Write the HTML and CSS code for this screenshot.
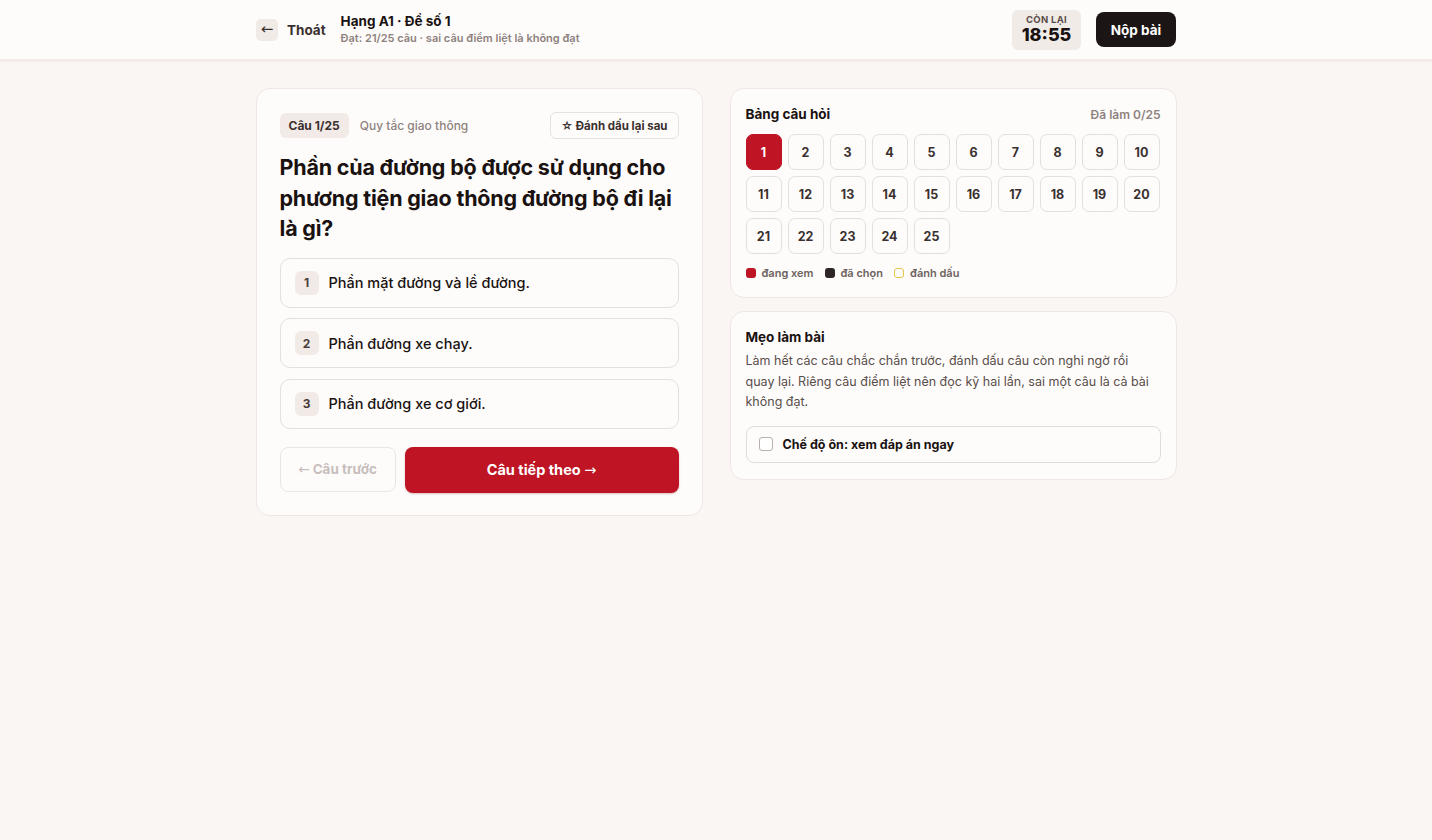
FILE: index.html
```html
<!DOCTYPE html>
<html lang="vi">
<head>
<meta charset="utf-8">
<title>Hạng A1 · Đề số 1</title>
<link rel="stylesheet" href="styles.css">
</head>
<body>
<header class="topbar">
  <div class="topbar-inner">
    <div class="left">
      <button class="back"><span class="arrow">←</span></button>
      <span class="exit">Thoát</span>
      <div class="title-block">
        <div class="title">Hạng A1 · Đề số 1</div>
        <div class="subtitle">Đạt: 21/25 câu · sai câu điểm liệt là không đạt</div>
      </div>
    </div>
    <div class="right">
      <div class="timer">
        <div class="timer-label">CÒN LẠI</div>
        <div class="timer-value">18:55</div>
      </div>
      <button class="submit">Nộp bài</button>
    </div>
  </div>
</header>

<main class="content">
  <section class="card question-card">
    <div class="q-head">
      <span class="chip">Câu 1/25</span>
      <span class="category">Quy tắc giao thông</span>
      <button class="mark">☆ Đánh dấu lại sau</button>
    </div>
    <h1 class="question">Phần của đường bộ được sử dụng cho phương tiện giao thông đường bộ đi lại là gì?</h1>
    <div class="options">
      <button class="option"><span class="num">1</span><span class="opt-text">Phần mặt đường và lề đường.</span></button>
      <button class="option"><span class="num">2</span><span class="opt-text">Phần đường xe chạy.</span></button>
      <button class="option"><span class="num">3</span><span class="opt-text">Phần đường xe cơ giới.</span></button>
    </div>
    <div class="nav">
      <button class="prev"><span class="ar">←</span> Câu trước</button>
      <button class="next">Câu tiếp theo <span class="ar">→</span></button>
    </div>
  </section>

  <div class="side">
    <section class="card board">
      <div class="board-head">
        <span class="board-title">Bảng câu hỏi</span>
        <span class="board-count">Đã làm 0/25</span>
      </div>
      <div class="grid">
        <button class="cell active">1</button>
        <button class="cell">2</button>
        <button class="cell">3</button>
        <button class="cell">4</button>
        <button class="cell">5</button>
        <button class="cell">6</button>
        <button class="cell">7</button>
        <button class="cell">8</button>
        <button class="cell">9</button>
        <button class="cell">10</button>
        <button class="cell">11</button>
        <button class="cell">12</button>
        <button class="cell">13</button>
        <button class="cell">14</button>
        <button class="cell">15</button>
        <button class="cell">16</button>
        <button class="cell">17</button>
        <button class="cell">18</button>
        <button class="cell">19</button>
        <button class="cell">20</button>
        <button class="cell">21</button>
        <button class="cell">22</button>
        <button class="cell">23</button>
        <button class="cell">24</button>
        <button class="cell">25</button>
      </div>
      <div class="legend">
        <span class="legend-item"><span class="sw sw-red"></span>đang xem</span>
        <span class="legend-item"><span class="sw sw-dark"></span>đã chọn</span>
        <span class="legend-item"><span class="sw sw-yellow"></span>đánh dấu</span>
      </div>
    </section>

    <section class="card tips">
      <h2 class="tips-title">Mẹo làm bài</h2>
      <p class="tips-text">Làm hết các câu chắc chắn trước, đánh dấu câu còn nghi ngờ rồi quay lại. Riêng câu điểm liệt nên đọc kỹ hai lần, sai một câu là cả bài không đạt.</p>
      <label class="review">
        <span class="checkbox"></span>
        <span class="review-text">Chế độ ôn: xem đáp án ngay</span>
      </label>
    </section>
  </div>
</main>
</body>
</html>
```

FILE: styles.css
```css
* { box-sizing: border-box; }
html, body { margin: 0; padding: 0; }
body {
  background: #faf6f3;
  font-family: "Inter", "Liberation Sans", sans-serif;
  color: #1a1210;
  min-height: 840px;
}
button { font-family: inherit; cursor: pointer; }

.topbar {
  background: #fdfcfb;
  border-bottom: 3px solid #f4eae8;
  height: 62px;
}
.topbar-inner {
  width: 920px;
  margin: 0 auto;
  height: 59px;
  display: flex;
  align-items: center;
  justify-content: space-between;
}
.left { display: flex; align-items: center; }
.back {
  width: 22px; height: 22px;
  border: none; border-radius: 5px;
  background: #f1ebe8;
  color: #3a302e;
  padding: 0;
  display: flex; align-items: center; justify-content: center;
}
.arrow { font-family: "DejaVu Sans", sans-serif; font-size: 15px; line-height: 1; }
.exit { margin-left: 9px; font-weight: 700; font-size: 13.5px; color: #3a302e; }
.title-block { margin-left: 15px; }
.title { font-weight: 700; font-size: 13.5px; color: #1a1210; line-height: 17px; }
.subtitle { font-size: 11px; font-weight: 600; color: #8d827e; line-height: 15px; margin-top: 1px; }

.right { display: flex; align-items: center; gap: 15px; }
.timer {
  background: #f1ebe8;
  border-radius: 6px;
  width: 69px; height: 40px;
  display: flex; flex-direction: column; align-items: center; justify-content: center;
}
.timer-label { font-size: 9.5px; font-weight: 700; letter-spacing: 0.3px; color: #5a4e4a; line-height: 11px; }
.timer-value { font-size: 18px; font-weight: 800; color: #1a1210; line-height: 20px; }
.submit {
  background: #1c1516;
  color: #fff;
  border: none; border-radius: 8px;
  width: 80px; height: 35px;
  font-size: 13.5px; font-weight: 700;
}

.content {
  width: 921px;
  margin: 26px auto 0;
  display: grid;
  grid-template-columns: 447px 447px;
  gap: 27px;
  align-items: start;
}
.card {
  background: #fdfcfb;
  border: 1px solid #f0e7e4;
  border-radius: 14px;
}
.question-card { padding: 23px 23px 22px; }
.q-head { display: flex; align-items: center; }
.chip {
  background: #f2eae7;
  border-radius: 6px;
  height: 25px; padding: 0 9px;
  display: inline-flex; align-items: center;
  font-size: 12px; font-weight: 700; color: #3a302e;
}
.category { margin-left: 11px; font-size: 12px; font-weight: 500; color: #8d827e; }
.mark {
  margin-left: auto;
  height: 27px; padding: 0 10px;
  background: #fdfcfb;
  border: 1px solid #e8e0dd; border-radius: 6px;
  font-size: 11.5px; font-weight: 700; color: #3a302e;
}
.question {
  margin: 13px 0 0;
  font-size: 21.5px; font-weight: 700; line-height: 30.5px;
  color: #1a1210;
  letter-spacing: -0.2px;
}
.options { margin-top: 14px; display: flex; flex-direction: column; gap: 10.5px; }
.option {
  height: 50px;
  border: 1px solid #e6dedb; border-radius: 10px;
  background: #fdfcfb;
  display: flex; align-items: center;
  padding: 0 14px;
  text-align: left;
}
.num {
  width: 24px; height: 24px;
  border-radius: 6px;
  background: #f2eae7;
  display: flex; align-items: center; justify-content: center;
  font-size: 12px; font-weight: 700; color: #4a3e3a;
}
.opt-text { margin-left: 10px; font-size: 14.5px; font-weight: 500; color: #1a1210; }
.nav { margin-top: 18px; display: flex; gap: 9px; }
.ar { font-family: "DejaVu Sans", sans-serif; font-weight: 400; }
.prev {
  width: 116px; height: 45px;
  background: #fdfcfb;
  border: 1px solid #ece5e2; border-radius: 8px;
  font-size: 13.5px; font-weight: 700; color: #c8bebb;
}
.next {
  flex: 1; height: 46px;
  background: #be1424;
  border: none; border-radius: 8px;
  color: #fff; font-size: 14.5px; font-weight: 700;
  box-shadow: 0 1px 2px rgba(120, 10, 20, 0.25);
}

.side { display: flex; flex-direction: column; gap: 13px; }
.board { padding: 15px 15px 17px; }
.board-head { display: flex; justify-content: space-between; align-items: center; height: 20px; }
.board-title { font-size: 13.5px; font-weight: 700; color: #1a1210; }
.board-count { font-size: 12px; font-weight: 600; color: #8d827e; }
.grid {
  margin-top: 10px;
  display: grid;
  grid-template-columns: repeat(10, 36px);
  gap: 6px;
}
.cell {
  width: 36px; height: 36px;
  border: 1px solid #e6dedb; border-radius: 7px;
  background: #fdfcfb;
  font-size: 12.5px; font-weight: 700; color: #3a302e;
  padding: 0;
}
.cell.active { background: #be1424; border-color: #be1424; color: #fff; }
.legend { margin-top: 12px; display: flex; gap: 11px; align-items: center; height: 14px; }
.legend-item { display: inline-flex; align-items: center; gap: 6px; font-size: 11px; font-weight: 600; color: #6e625e; }
.sw { width: 10px; height: 10px; border-radius: 3px; display: inline-block; }
.sw-red { background: #be1424; }
.sw-dark { background: #2d2526; }
.sw-yellow { border: 1.5px solid #e8c547; background: #fdfcfb; }

.tips { padding: 15px 15px 16px; }
.tips-title { margin: 0; font-size: 13.5px; font-weight: 700; color: #1a1210; line-height: 20px; }
.tips-text { margin: 4px 0 0; font-size: 12.5px; line-height: 20.5px; color: #5a4e4a; }
.review {
  margin-top: 13px;
  height: 37px;
  border: 1px solid #e3dbd8; border-radius: 8px;
  display: flex; align-items: center;
  padding: 0 12px;
}
.checkbox {
  width: 14px; height: 14px;
  border: 1.5px solid #b9afac; border-radius: 3px;
  background: #fff;
}
.review-text { margin-left: 10px; font-size: 12.5px; font-weight: 700; color: #1a1210; }
```
